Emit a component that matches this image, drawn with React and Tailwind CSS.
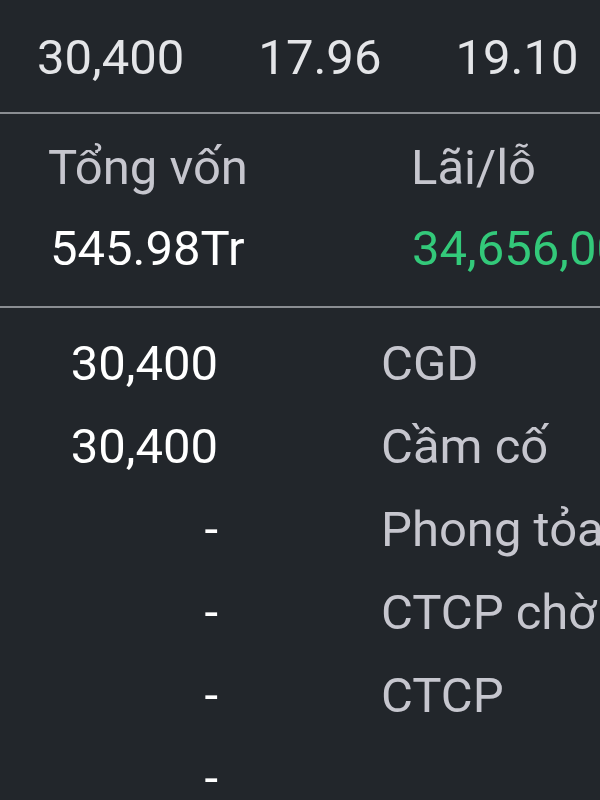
const rows = [
  { value: '30,400', label: 'CGD' },
  { value: '30,400', label: 'Cầm cố' },
  { value: '-', label: 'Phong tỏa' },
  { value: '-', label: 'CTCP chờ về' },
  { value: '-', label: 'CTCP' },
  { value: '-', label: '' },
];

export default function App() {
  return (
    <div
      className="w-[600px] h-[800px] overflow-hidden bg-[#22262b] text-[49px] whitespace-nowrap"
      style={{ fontFamily: 'Roboto, "Noto Sans", sans-serif' }}
    >
      {/* Price summary */}
      <div className="h-[112px] pt-[34px] pl-[37px] flex gap-[74px] leading-[48px] text-[#e4e5e8]">
        <span className="shrink-0">30,400</span>
        <span className="shrink-0">17.96</span>
        <span className="shrink-0">19.10</span>
      </div>
      <div className="h-[2px] bg-[#8a8d92]" />

      {/* Capital / profit */}
      <div className="h-[192px] pt-[30px] grid grid-cols-[363px_1fr] content-start pl-[48px] leading-[48px]">
        <span className="text-[#c6c6ce]">Tổng vốn</span>
        <span className="text-[#c6c6ce]">Lãi/lỗ</span>
        <span className="mt-[33px] pl-[2px] text-white">545.98Tr</span>
        <span className="mt-[33px] pl-[1px] text-[#33c97a]">34,656,000</span>
      </div>
      <div className="h-[2px] bg-[#8a8d92]" />

      {/* Holdings breakdown */}
      <div className="pt-[14px] flex flex-col">
        {rows.map((row, i) => (
          <div key={i} className="flex h-[83px] leading-[83px]">
            <span className="w-[218px] shrink-0 text-right text-white">{row.value}</span>
            <span className="ml-[163px] shrink-0 text-[#c6c6ce]">{row.label}</span>
          </div>
        ))}
      </div>
    </div>
  );
}
